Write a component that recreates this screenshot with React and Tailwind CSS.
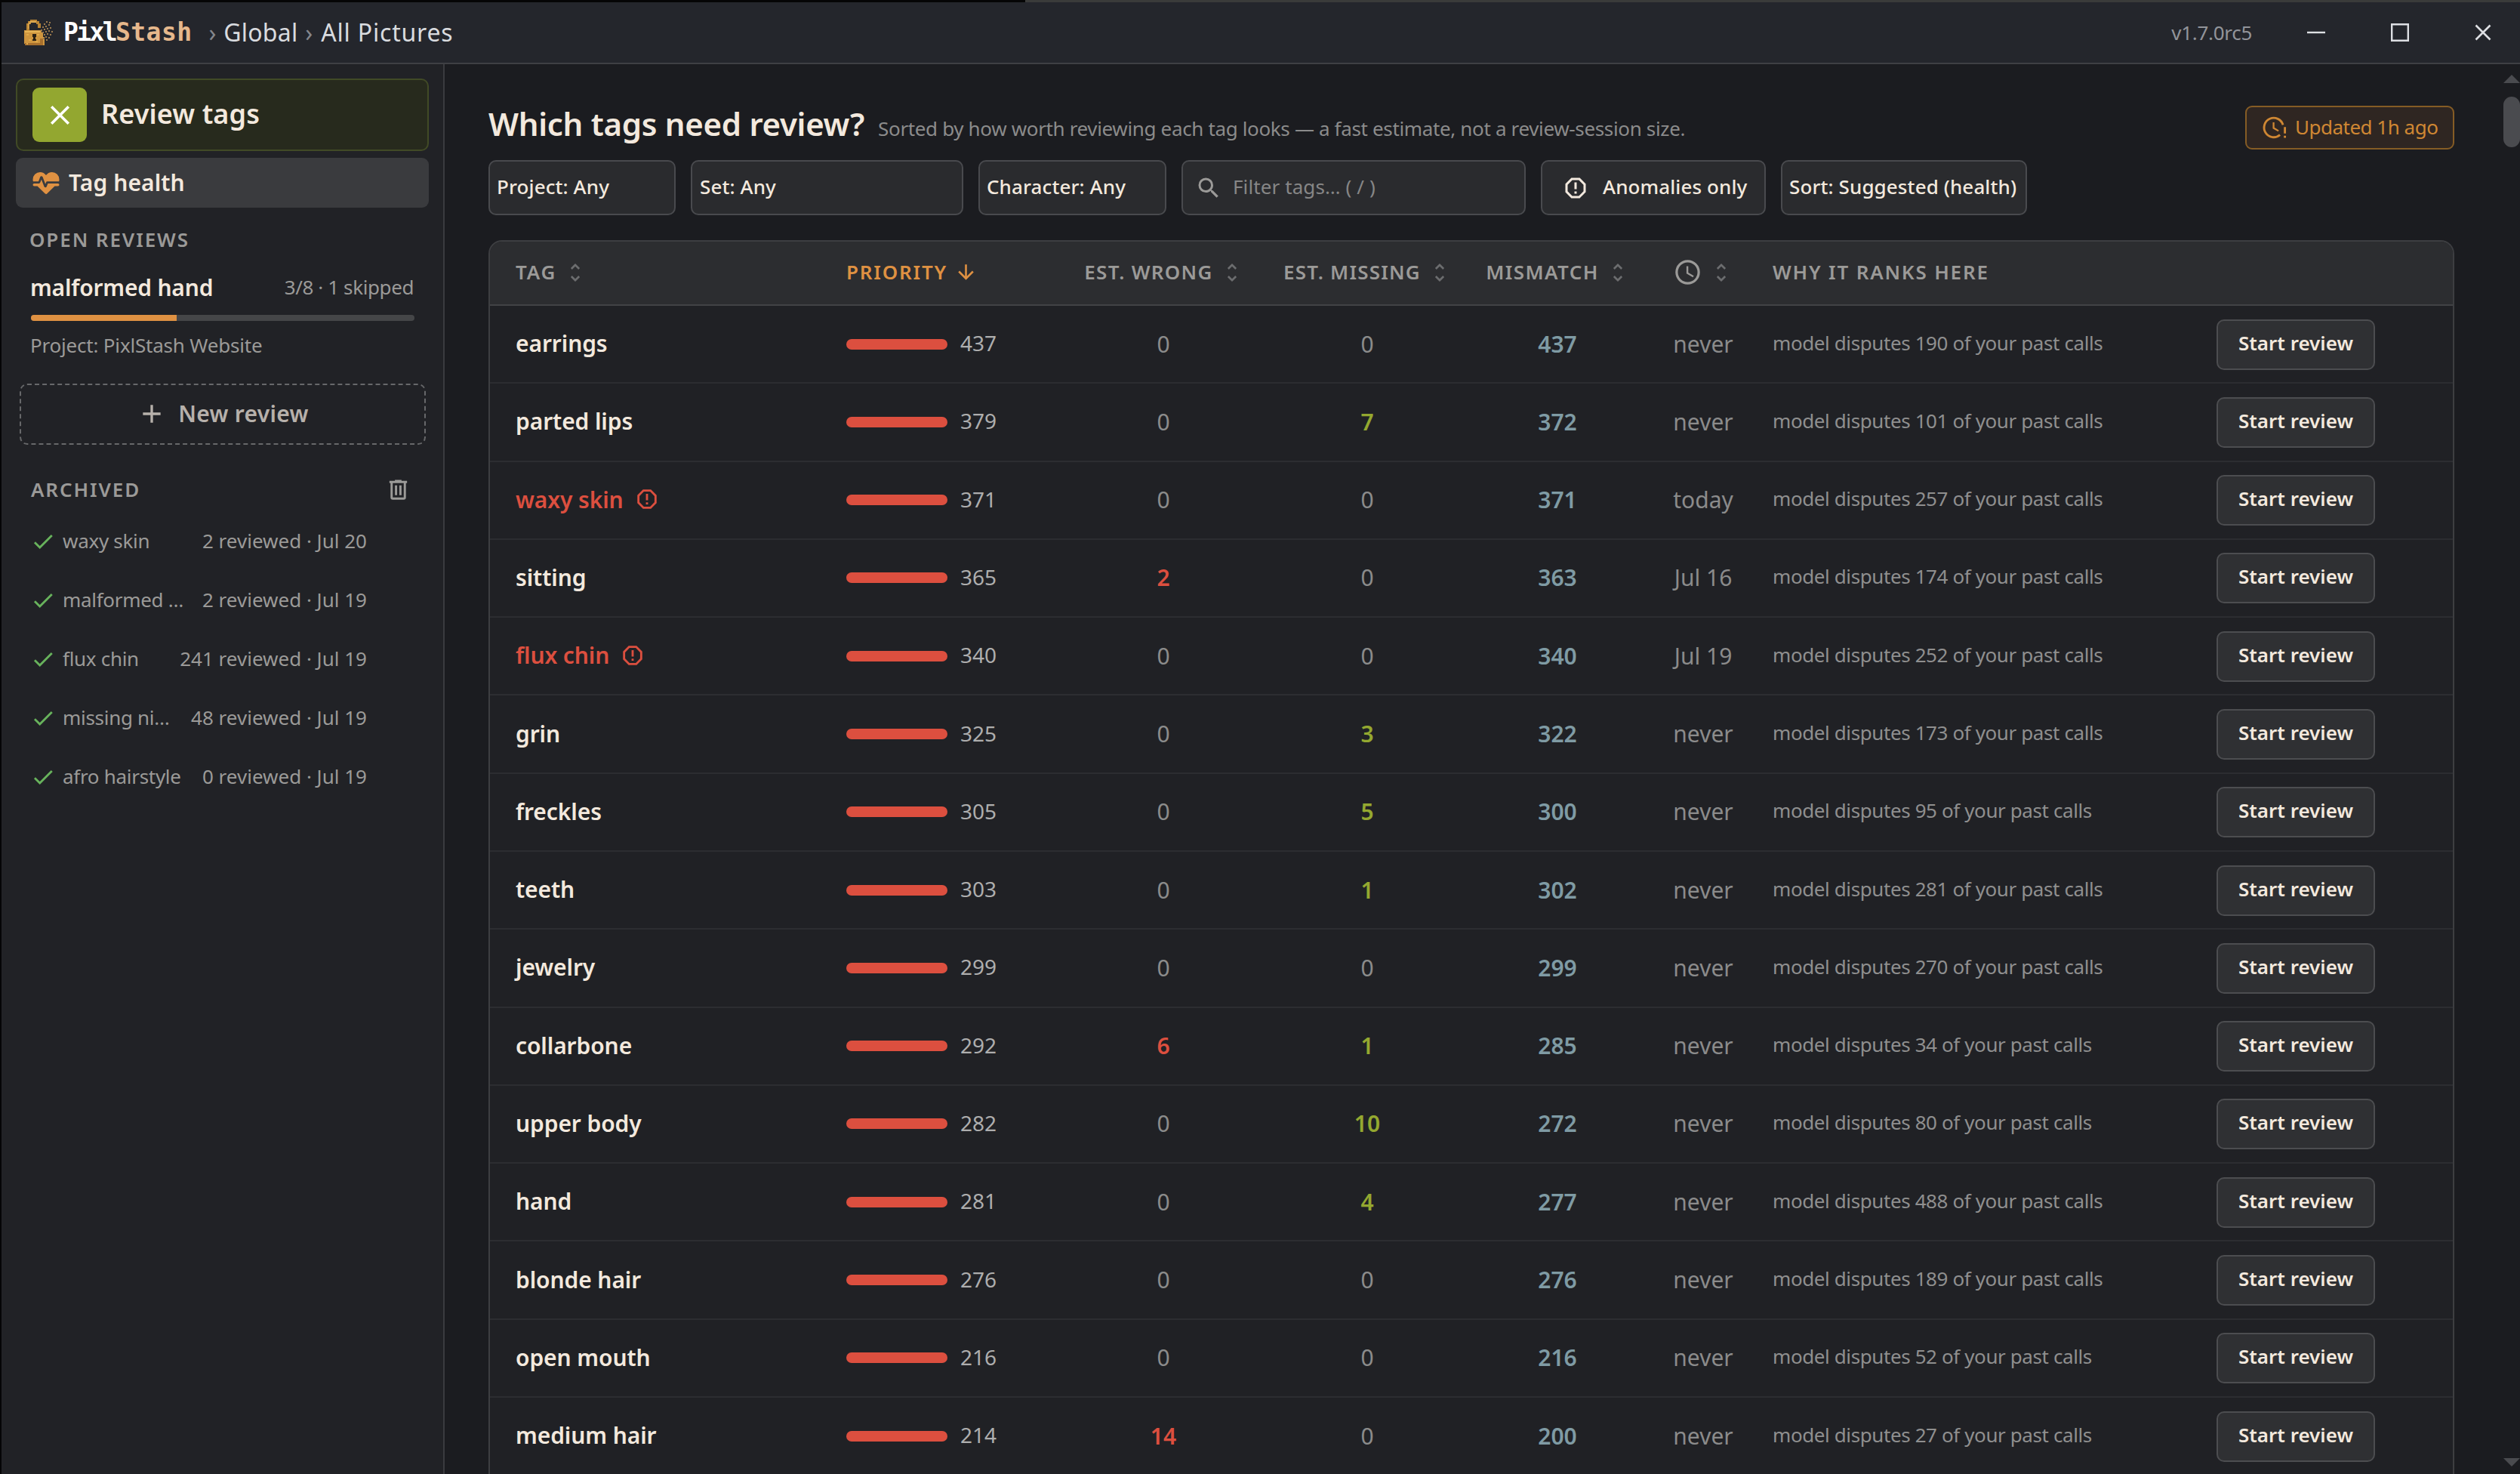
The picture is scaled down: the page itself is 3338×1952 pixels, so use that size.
import React from 'react';

const ICONS = {
  heartPulse:
    'M7.5,4A5.5,5.5 0 0,0 2,9.5C2,10 2.09,10.5 2.22,11H6.3L7.57,7.63C7.87,6.83 9.05,6.75 9.43,7.63L11.5,13L12.09,11.58C12.22,11.25 12.57,11 13,11H21.78C21.91,10.5 22,10 22,9.5A5.5,5.5 0 0,0 16.5,4C14.64,4 13,4.93 12,6.34C11,4.93 9.36,4 7.5,4V4M3,12.5A1,1 0 0,0 2,13.5A1,1 0 0,0 3,14.5H5.44L11,20C12,20.9 12,20.9 13,20L18.56,14.5H21A1,1 0 0,0 22,13.5A1,1 0 0,0 21,12.5H13.4L12.47,14.8C12.07,15.81 10.92,15.67 10.55,14.83L8.5,9.5L7.54,11.83C7.39,12.21 7.05,12.5 6.6,12.5H3Z',
  alert:
    'M8.27,3L3,8.27V15.73L8.27,21H15.73C17.5,19.24 21,15.73 21,15.73V8.27L15.73,3M9.1,5H14.9L19,9.1V14.9L14.9,19H9.1L5,14.9V9.1M11,15H13V17H11V15M11,7H13V13H11V7',
  trash:
    'M9,3V4H4V6H5V19A2,2 0 0,0 7,21H17A2,2 0 0,0 19,19V6H20V4H15V3H9M7,6H17V19H7V6M9,8V17H11V8H9M13,8V17H15V8H13Z',
  check: 'M21,7L9,19L3.5,13.5L4.91,12.09L9,16.17L19.59,5.59L21,7Z',
  search:
    'M9.5,3A6.5,6.5 0 0,1 16,9.5C16,11.11 15.41,12.59 14.44,13.73L14.71,14H15.5L20.5,19L19,20.5L14,15.5V14.71L13.73,14.44C12.59,15.41 11.11,16 9.5,16A6.5,6.5 0 0,1 3,9.5A6.5,6.5 0 0,1 9.5,3M9.5,5C7,5 5,7 5,9.5C5,12 7,14 9.5,14C12,14 14,12 14,9.5C14,7 12,5 9.5,5Z',
  clock:
    'M12,20A8,8 0 0,0 20,12A8,8 0 0,0 12,4A8,8 0 0,0 4,12A8,8 0 0,0 12,20M12,2A10,10 0 0,1 22,12A10,10 0 0,1 12,22C6.47,22 2,17.5 2,12A10,10 0 0,1 12,2M12.5,7V12.25L17,14.92L16.25,16.15L11,13V7H12.5Z',
  plus: 'M19,13H13V19H11V13H5V11H11V5H13V11H19V13Z',
  close:
    'M19,6.41L17.59,5L12,10.59L6.41,5L5,6.41L10.59,12L5,17.59L6.41,19L12,13.41L17.59,19L19,17.59L13.41,12L19,6.41Z',
  sort: 'M12,18.17L8.83,15L7.42,16.41L12,21L16.59,16.41L15.17,15M12,5.83L15.17,9L16.58,7.59L12,3L7.41,7.59L8.83,9L12,5.83Z',
  arrowDown: 'M11,4H13V16L18.5,10.5L19.92,11.92L12,19.84L4.08,11.92L5.5,10.5L11,16V4Z',
};

function Icon({ name, className }) {
  return (
    <svg viewBox="0 0 24 24" className={`shrink-0 ${className}`} fill="currentColor" fillRule="evenodd">
      <path d={ICONS[name]} />
    </svg>
  );
}

const DUST = [
  [28, 8], [31, 5], [26, 12], [30, 11], [34, 9], [24, 16], [28, 15], [32, 14], [36, 13], [26, 19],
  [30, 18], [34, 17], [38, 18], [28, 22], [32, 21], [36, 22], [30, 25], [34, 26], [27, 27], [31, 29], [35, 6],
];

function PadlockLogo() {
  return (
    <svg viewBox="0 0 40 40" className="size-[40px] shrink-0" shapeRendering="crispEdges">
      <path d="M5 17V8h2V5h3V3h9v2h3v3h2v6h-4V9h-2V7h-7v2H9v8z" fill="#b98434" />
      <path d="M7 15V8h2V5h9v2h-8v2H8v6z" fill="#dfac52" />
      <path d="M2 17h23v3h2v6h2v11H3v-2H2z" fill="#cf963f" />
      <path d="M3 18h20v2H3z" fill="#e6b455" />
      <path d="M3 34h24v3H3zM23 28h4v6h-4z" fill="#a8702d" />
      <path d="M5 22h3v2H5zM8 29h3v2H8zM19 22h3v2h-3zM5 34h2v2H5zM17 31h3v2h-3z" fill="#e0a94a" />
      <path d="M13 22h5v4h-1v3h1v2h-5v-2h1v-3h-1z" fill="#2b2114" />
      {DUST.map(([x, y]) => (
        <rect key={`${x}-${y}`} x={x} y={y} width="1.6" height="1.6" fill="#9a7a4d" />
      ))}
    </svg>
  );
}

function ClockAlert() {
  return (
    <svg viewBox="0 0 24 24" className="size-[34px] shrink-0" fill="none" stroke="currentColor" strokeWidth="2">
      <path d="M19.8 9.5A9 9 0 1 0 17 18.8" />
      <path d="M11 7v5.4l4.6 2.7" strokeWidth="1.6" />
      <path d="M21.6 11.5v6M21.6 19.5v2" />
    </svg>
  );
}

function TitleBar() {
  return (
    <header className="flex h-[82px] shrink-0 items-center border-b-2 border-[#3f4044] bg-[#24262c] pl-[28px]">
      <PadlockLogo />
      <div className="ml-[14px] flex pb-[1px] font-['DejaVu_Sans_Mono',monospace] text-[33px] leading-[40px] font-bold">
        <span className="tracking-[-2.6px] text-white">Pixl</span>
        <span className="tracking-[0.4px] text-[#e6b88c]">Stash</span>
      </div>
      <nav className="ml-[22px] flex items-center text-[32px] leading-[40px] text-[#d9dbdf]">
        <span className="mr-[10px] text-[#85878c]">›</span>
        <span className="tracking-[0.2px]">Global</span>
        <span className="mr-[11px] ml-[10px] text-[#85878c]">›</span>
        <span className="tracking-[0.8px]">All Pictures</span>
      </nav>
      <span className="ml-auto tracking-[-0.3px] text-[#92949a]">v1.7.0rc5</span>
      <div className="flex text-[#dddfe3]">
        <svg viewBox="0 0 24 24" className="mr-[87px] ml-[73px] size-[24px]" stroke="currentColor" strokeWidth="2.4">
          <path d="M0 12h24" />
        </svg>
        <svg viewBox="0 0 24 24" className="mr-[86px] size-[24px]" fill="none" stroke="currentColor" strokeWidth="2.4">
          <path d="M1.2 1.2h21.6v21.6H1.2z" />
        </svg>
        <svg viewBox="0 0 24 24" className="mr-[37px] size-[24px]" stroke="currentColor" strokeWidth="2.6">
          <path d="M2.5 2.5l19 19M21.5 2.5l-19 19" />
        </svg>
      </div>
    </header>
  );
}

const ARCHIVED = [
  ['waxy skin', '2 reviewed · Jul 20'],
  ['malformed …', '2 reviewed · Jul 19'],
  ['flux chin', '241 reviewed · Jul 19'],
  ['missing ni…', '48 reviewed · Jul 19'],
  ['afro hairstyle', '0 reviewed · Jul 19'],
];

function Sidebar() {
  return (
    <aside className="flex w-[587px] shrink-0 flex-col border-r-2 border-[#3a3b3f] bg-[#212226] px-[19px] pt-[19px] text-[#9b9a98]">
      <div className="flex h-[96px] items-center rounded-[10px] border-2 border-[#414a26] bg-[#272a1d] pl-[20px]">
        <button className="flex size-[72px] items-center justify-center rounded-[9px] bg-[#93a730] text-white">
          <Icon name="close" className="size-[43px]" />
        </button>
        <span className="ml-[19px] pb-[3px] text-[36px] font-semibold tracking-[0.1px] text-[#f3e9de]">Review tags</span>
      </div>
      <div className="mt-[9px] flex h-[66px] items-center rounded-[9px] bg-[#3a3b3e] pl-[19px] text-[#f3e9de]">
        <Icon name="heartPulse" className="size-[42px] text-[#df9142]" />
        <span className="ml-[9px] pb-[1px] text-[30px] font-semibold tracking-[0.1px]">Tag health</span>
      </div>
      <h2 className="mt-[24px] ml-[18px] h-[36px] leading-[36px] font-semibold tracking-[1.9px]">OPEN REVIEWS</h2>
      <div className="mt-[25px] mr-[20px] ml-[19px] flex items-center justify-between">
        <span className="pt-[1px] text-[30px] leading-[40px] font-semibold tracking-[-0.2px] text-[#f3e9de]">malformed hand</span>
        <span className="tracking-[-0.4px]">3/8 · 1 skipped</span>
      </div>
      <div className="mt-[16px] mr-[19px] ml-[20px] flex h-[8px] overflow-hidden rounded-full bg-[#454648]">
        <div className="w-[193px] bg-[#df9142]" />
      </div>
      <p className="mt-[14px] ml-[19px] h-[36px] leading-[36px] tracking-[-0.2px]">Project: PixlStash Website</p>
      <button className="mt-[33px] ml-[5px] flex h-[81px] w-[538px] items-center justify-center rounded-[10px] border-2 border-dashed border-[#67686a] pb-[1px] text-[30px] font-semibold text-[#b7b1ab]">
        <Icon name="plus" className="mr-[15px] size-[40px]" />
        <span className="pb-[1px] tracking-[0.3px]">New review</span>
      </button>
      <div className="mt-[41px] mr-[23px] ml-[20px] flex h-[36px] items-center justify-between">
        <h2 className="font-semibold tracking-[1.9px]">ARCHIVED</h2>
        <Icon name="trash" className="size-[35px]" />
      </div>
      <ul className="mt-[12px] mr-[82px] ml-[19px]">
        {ARCHIVED.map(([tag, info]) => (
          <li key={tag} className="flex h-[78px] items-center">
            <Icon name="check" className="size-[34px] text-[#68b35c]" />
            <span className="ml-[9px] pb-[2px] tracking-[-0.3px]">{tag}</span>
            <span className="ml-auto pb-[2px]">{info}</span>
          </li>
        ))}
      </ul>
    </aside>
  );
}

function Filters() {
  const box = 'flex h-[73px] items-center rounded-[10px] border-2 border-[#494a4e] bg-[#2a2b2e]';
  const label = 'pb-[3px] font-medium tracking-[0.1px]';
  return (
    <div className="flex gap-[20px] text-[#f3e9de]">
      <div className={`${box} w-[248px] pl-[9px]`}><span className={label}>Project: Any</span></div>
      <div className={`${box} w-[361px] pl-[10px]`}><span className={label}>Set: Any</span></div>
      <div className={`${box} w-[249px] pl-[9px]`}><span className={label}>Character: Any</span></div>
      <div className={`${box} w-[456px] pl-[16px]`}>
        <Icon name="search" className="size-[36px] text-[#9b9a98]" />
        <span className="ml-[14px] pb-[3px] tracking-[0.1px] text-[#868686]">Filter tags… ( / )</span>
      </div>
      <div className={`${box} w-[298px] pl-[26px]`}>
        <Icon name="alert" className="size-[36px]" />
        <span className={`${label} ml-[18px]`}>Anomalies only</span>
      </div>
      <div className={`${box} w-[326px] pl-[9px]`}><span className={label}>Sort: Suggested (health)</span></div>
    </div>
  );
}

const COLS = 'grid grid-cols-[438px_285px_270px_270px_234px_152px_604px_1fr] items-center pl-[34px]';

const ROWS = [
  ['earrings', 437, 0, 0, 437, 'never', 190],
  ['parted lips', 379, 0, 7, 372, 'never', 101],
  ['waxy skin', 371, 0, 0, 371, 'today', 257, true],
  ['sitting', 365, 2, 0, 363, 'Jul 16', 174],
  ['flux chin', 340, 0, 0, 340, 'Jul 19', 252, true],
  ['grin', 325, 0, 3, 322, 'never', 173],
  ['freckles', 305, 0, 5, 300, 'never', 95],
  ['teeth', 303, 0, 1, 302, 'never', 281],
  ['jewelry', 299, 0, 0, 299, 'never', 270],
  ['collarbone', 292, 6, 1, 285, 'never', 34],
  ['upper body', 282, 0, 10, 272, 'never', 80],
  ['hand', 281, 0, 4, 277, 'never', 488],
  ['blonde hair', 276, 0, 0, 276, 'never', 189],
  ['open mouth', 216, 0, 0, 216, 'never', 52],
  ['medium hair', 214, 14, 0, 200, 'never', 27],
];

function SortIcon() {
  return <Icon name="sort" className="size-[32px] text-[#6c6d6f]" />;
}

function Count({ value, tone }) {
  return (
    <span className={`pb-[1px] text-center text-[30px] ${value ? `font-semibold ${tone}` : 'text-[#8b8b8b]'}`}>{value}</span>
  );
}

function TagTable() {
  return (
    <section className="mt-[33px] w-[2604px] flex-1 rounded-t-[18px] border-2 border-b-0 border-[#3d3e41] bg-[#202125]">
      <div className={`${COLS} h-[85px] rounded-t-[16px] border-b-2 border-[#424346] bg-[#2c2d30] pb-[2px] font-semibold tracking-[1.8px] text-[#9b9a98]`}>
        <div className="flex items-center gap-[9px]">TAG<SortIcon /></div>
        <div className="flex items-center gap-[9px] text-[#df9142]">
          <span>PRIORITY</span>
          <Icon name="arrowDown" className="size-[31px]" />
        </div>
        <div className="flex items-center justify-center gap-[9px] pl-[2px] tracking-[1.3px]">EST. WRONG<SortIcon /></div>
        <div className="flex items-center justify-center gap-[9px] pl-[1px] tracking-[1.2px]">EST. MISSING<SortIcon /></div>
        <div className="flex items-center justify-center gap-[9px] pl-[1px] tracking-[1.4px]">MISMATCH<SortIcon /></div>
        <div className="flex items-center justify-center gap-[9px]"><Icon name="clock" className="size-[39px]" /><SortIcon /></div>
        <div className="pl-[16px]">WHY IT RANKS HERE</div>
      </div>
      {ROWS.map(([tag, priority, wrong, missing, mismatch, when, disputes, anomaly]) => (
        <div key={tag} className={`${COLS} h-[103.29px] border-b-2 border-[#2c2d31]`}>
          <div className={`flex items-center text-[30px] font-semibold tracking-[-0.1px] ${anomaly ? 'text-[#dc4f3f]' : 'text-[#f3e9de]'}`}>
            <span className="pb-[2px]">{tag}</span>
            {anomaly && <Icon name="alert" className="mb-[2px] ml-[14px] size-[34px]" />}
          </div>
          <div className="flex items-center">
            <div className="h-[14px] w-[134px] rounded-full bg-[#dc4f3f]" />
            <span className="ml-[17px] pb-[3px] text-[28px] text-[#aeaeae]">{priority}</span>
          </div>
          <Count value={wrong} tone="text-[#dc4f3f]" />
          <Count value={missing} tone="text-[#94a830]" />
          <Count value={mismatch} tone="text-[#7f9ba4]" />
          <span className="pb-[1px] text-center text-[30px] text-[#8b8b8b]">{when}</span>
          <span className="pb-[3px] pl-[16px] tracking-[-0.4px] text-[#8f8f8f]">
            model disputes {disputes} of your past calls
          </span>
          <button className="mt-[1px] flex h-[67px] w-[210px] items-center justify-center rounded-[10px] border-2 border-[#4c4d50] bg-[#2f3033] pb-[4px] font-semibold text-[#f3e9de]">
            Start review
          </button>
        </div>
      ))}
    </section>
  );
}

export default function App() {
  return (
    <div className="flex h-[1952px] w-[3338px] flex-col overflow-hidden bg-[#050506] pl-[2px] font-['Noto_Sans',sans-serif] text-[26px] whitespace-nowrap">
      <div className="h-[3px] shrink-0 pl-[1356px]">
        <div className="h-full bg-[#3a3b3a]" />
      </div>
      <TitleBar />
      <div className="flex min-h-0 flex-1">
        <Sidebar />
        <main className="flex min-w-0 flex-1 flex-col overflow-hidden bg-[#1b1c20] pl-[58px]">
          <div className="flex h-[127px] w-[2604px] shrink-0 items-start">
            <div className="mt-[49px] flex items-baseline">
              <h1 className="text-[42px] leading-[60px] font-semibold tracking-[-0.3px] text-[#f3e9de]">Which tags need review?</h1>
              <p className="ml-[18px] tracking-[-0.35px] text-[#8b8b8b]">
                Sorted by how worth reviewing each tag looks — a fast estimate, not a review-session size.
              </p>
            </div>
            <div className="mt-[55px] ml-auto flex h-[58px] w-[277px] items-center rounded-[9px] border-2 border-[#855c25] bg-[#2f2622] pl-[20px] text-[#cf8733]">
              <ClockAlert />
              <span className="ml-[10px] pb-[2px] tracking-[-0.5px]">Updated 1h ago</span>
            </div>
          </div>
          <Filters />
          <TagTable />
        </main>
        <div className="flex w-[22px] shrink-0 flex-col bg-[#1b1c20] pt-[14px] pb-[10px] text-[#4a4b4f]">
          <svg viewBox="0 0 22 11" className="h-[11px] w-[22px]" fill="currentColor"><path d="M0 11L11 0l11 11z" /></svg>
          <div className="mt-[18px] h-[67px] rounded-[11px] bg-[#4a4b4f]" />
          <svg viewBox="0 0 22 11" className="mt-auto h-[11px] w-[22px]" fill="currentColor"><path d="M0 0h22L11 11z" /></svg>
        </div>
      </div>
    </div>
  );
}
